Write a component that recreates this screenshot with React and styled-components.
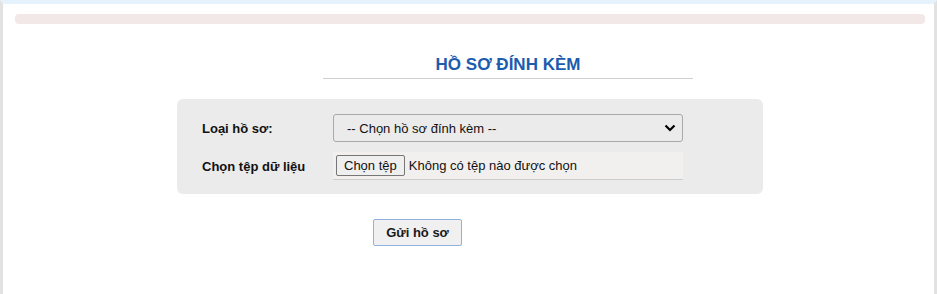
import styled, { createGlobalStyle } from "styled-components"

const GlobalStyle = createGlobalStyle`
  html, body { margin: 0; padding: 0; background: #fff; }
  body { font-family: "Liberation Sans", Arial, sans-serif; font-size: 13px; color: #111; }
`

const Frame = styled.div`
  box-sizing: border-box;
  width: 937px;
  height: 294px;
  border-left: 3px solid #e2e2e2;
  border-right: 3px solid #e2e2e2;
  border-top: 4px solid #e6f3fc;
  padding: 10px 9px 0 12px;
`

const Notice = styled.div`
  height: 10px;
  background: #f3e8e8;
  border-radius: 4px;
`

const TitleWrap = styled.div`
  margin: 31px 0 0 308px;
  width: 370px;
  border-bottom: 1px solid #cfcfcf;
  text-align: center;
  padding-bottom: 3px;
`

const Title = styled.h2`
  margin: 0;
  font-size: 17px;
  font-weight: bold;
  color: #1b5cae;
  line-height: 20px;
`

const Panel = styled.div`
  margin: 20px 0 0 162px;
  width: 586px;
  height: 95px;
  box-sizing: border-box;
  background: #ebebeb;
  border-radius: 6px;
  padding: 15px 0 0 25px;
  display: flex;
  flex-direction: column;
  gap: 10px;
`

const Row = styled.div`
  display: flex;
  align-items: center;
`

const Label = styled.label`
  width: 131px;
  font-weight: bold;
  font-size: 13px;
`

const Select = styled.select`
  width: 350px;
  height: 28px;
  box-sizing: border-box;
  border: 1px solid #a9a9a9;
  border-radius: 3px;
  background: #ebebeb;
  font-family: "Liberation Sans", Arial, sans-serif;
  font-size: 13px;
  color: #111;
  padding: 0 0 0 13px;
  appearance: none;
  background-image: url("data:image/svg+xml;utf8,<svg xmlns='http://www.w3.org/2000/svg' width='12' height='8'><path d='M1.5 1.5 L6 6 L10.5 1.5' stroke='black' stroke-width='2.2' fill='none'/></svg>");
  background-repeat: no-repeat;
  background-position: right 6px center;
`

const FileBox = styled.div`
  width: 350px;
  height: 28px;
  box-sizing: border-box;
  background: #f1f0ef;
  border-bottom: 1px solid #cccccc;
  display: flex;
  align-items: center;
  padding-left: 3px;
  gap: 4px;
`

const FileButton = styled.button`
  height: 21px;
  box-sizing: border-box;
  border: 1px solid #767676;
  border-radius: 2px;
  background: #efefef;
  font-family: "Liberation Sans", Arial, sans-serif;
  font-size: 13px;
  color: #111;
  padding: 0 7px;
`

const Submit = styled.button`
  margin: 25px 0 0 358px;
  width: 89px;
  height: 27px;
  box-sizing: border-box;
  border: 1px solid #8fb1de;
  border-radius: 2px;
  background: #f0f0f0;
  font-family: "Liberation Sans", Arial, sans-serif;
  font-size: 13px;
  font-weight: bold;
  color: #1a1a1a;
`

export default function App() {
  return (
    <>
      <GlobalStyle />
      <Frame>
        <Notice />
        <TitleWrap>
          <Title>HỒ SƠ ĐÍNH KÈM</Title>
        </TitleWrap>
        <Panel>
          <Row>
            <Label>Loại hồ sơ:</Label>
            <Select defaultValue="">
              <option value="">-- Chọn hồ sơ đính kèm --</option>
            </Select>
          </Row>
          <Row>
            <Label>Chọn tệp dữ liệu</Label>
            <FileBox>
              <FileButton type="button">Chọn tệp</FileButton>
              <span>Không có tệp nào được chọn</span>
            </FileBox>
          </Row>
        </Panel>
        <Submit type="button">Gửi hồ sơ</Submit>
      </Frame>
    </>
  )
}
